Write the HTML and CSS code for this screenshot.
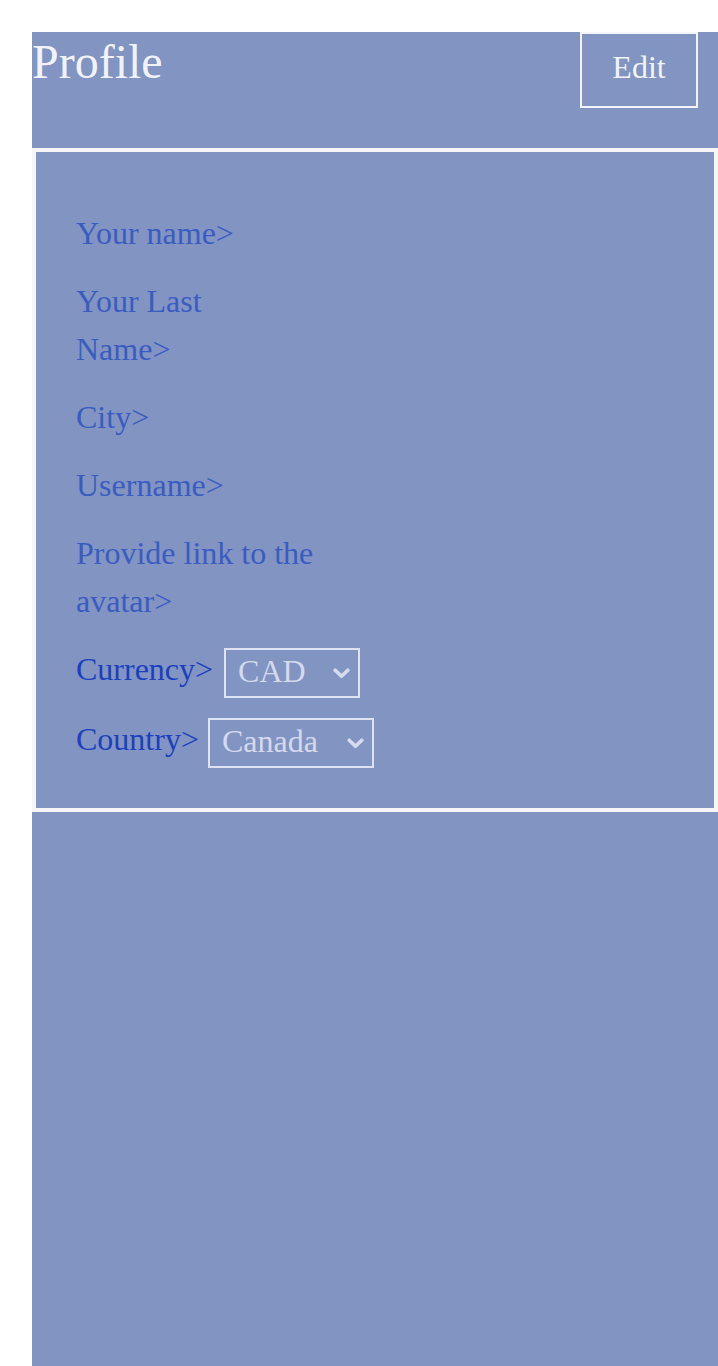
FILE: index.html
```html
<!DOCTYPE html>
<html lang="en">
<head>
<meta charset="utf-8">
<title>Profile</title>
<link rel="stylesheet" href="styles.css">
</head>
<body>
<div class="page">
  <header class="header">
    <h1 class="title">Profile</h1>
    <button class="edit-btn" type="button">Edit</button>
  </header>
  <section class="card">
    <div class="field">Your name&gt;</div>
    <div class="field">Your Last<br>Name&gt;</div>
    <div class="field">City&gt;</div>
    <div class="field">Username&gt;</div>
    <div class="field">Provide link to the<br>avatar&gt;</div>
    <div class="row">
      <label class="row-label" for="currency">Currency&gt;</label>
      <select id="currency" class="select select-currency">
        <option>CAD</option>
      </select>
    </div>
    <div class="row">
      <label class="row-label" for="country">Country&gt;</label>
      <select id="country" class="select select-country">
        <option>Canada</option>
      </select>
    </div>
  </section>
</div>
</body>
</html>
```

FILE: styles.css
```css
html, body {
  margin: 0;
  padding: 0;
  background: #ffffff;
}

body {
  padding: 32px 0 0 32px;
  font-family: "Liberation Serif", "Times New Roman", serif;
  min-height: 1366px;
  box-sizing: border-box;
  display: flex;
  flex-direction: column;
}

.page {
  flex: 1;
  background: #8194c2;
  display: flex;
  flex-direction: column;
}

.header {
  height: 116px;
  display: flex;
  justify-content: space-between;
  align-items: flex-start;
  padding-right: 20px;
}

.title {
  margin: 0;
  font-size: 48px;
  font-weight: normal;
  line-height: 60px;
  color: #f2f3fa;
}

.edit-btn {
  width: 118px;
  height: 76px;
  margin: 0;
  border: 2px solid #f4f5fb;
  background: transparent;
  color: #f2f3fa;
  font-family: "Liberation Serif", "Times New Roman", serif;
  font-size: 32px;
  line-height: 1;
  padding: 0 0 6px 0;
}

.card {
  border: 4px solid #f5f5fa;
  padding: 57px 40px 43px 40px;
  display: flex;
  flex-direction: column;
  gap: 20px;
}

.field {
  font-size: 32px;
  line-height: 48px;
  color: #3a5cc1;
}

.row {
  display: flex;
  align-items: flex-start;
  gap: 9px;
}

.row-label {
  font-size: 32px;
  line-height: 48px;
  color: #1b3fbd;
}

.select {
  -webkit-appearance: none;
  appearance: none;
  height: 50px;
  box-sizing: border-box;
  margin: 3px 0 -3px 0;
  border: 2px solid #dfe2f0;
  border-radius: 0;
  background-color: transparent;
  background-image: url("data:image/svg+xml,%3Csvg xmlns='http://www.w3.org/2000/svg' width='17' height='11' viewBox='0 0 17 11'%3E%3Cpath d='M2.2 2.2 L8.5 8.3 L14.8 2.2' fill='none' stroke='%23d6dbee' stroke-width='3.6' stroke-linecap='round' stroke-linejoin='round'/%3E%3C/svg%3E");
  background-repeat: no-repeat;
  background-position: right 8px center;
  background-size: 17px 11px;
  color: #d4d9ec;
  font-family: "Liberation Serif", "Times New Roman", serif;
  font-size: 32px;
  line-height: 42px;
  padding: 0 30px 4px 12px;
}

.select-currency {
  width: 136px;
  margin-left: 2px;
}

.select-country {
  width: 166px;
}
```
